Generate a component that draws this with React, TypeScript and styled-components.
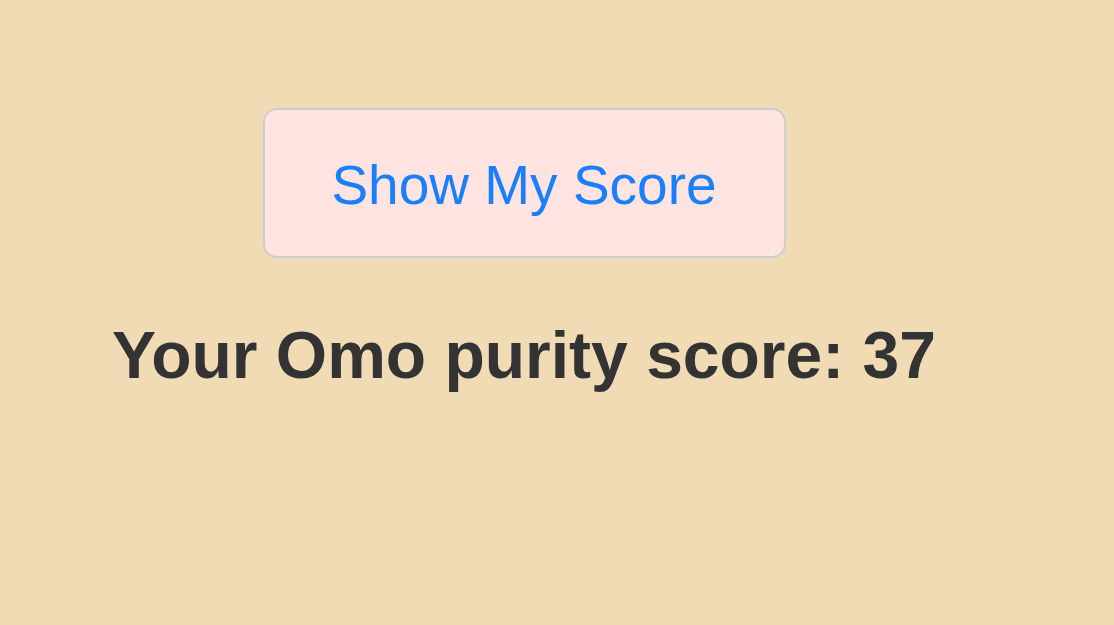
import React from "react";
import styled, { createGlobalStyle } from "styled-components";

const GlobalStyle = createGlobalStyle`
  html, body {
    margin: 0;
    padding: 0;
    background: #f0dbb5;
  }
  body {
    font-family: "Liberation Sans", Arial, Helvetica, sans-serif;
  }
`;

const Page = styled.main`
  width: 1048px;
  min-height: 625px;
  box-sizing: border-box;
  padding-top: 108px;
  display: flex;
  flex-direction: column;
  align-items: center;
`;

const ScoreButton = styled.button`
  width: 523px;
  box-sizing: border-box;
  padding: 48px 0 43px;
  background: #ffe4e1;
  border: 2px solid #cdcdcd;
  border-radius: 14px;
  color: #1a7ffb;
  font-family: "Liberation Sans", Arial, Helvetica, sans-serif;
  font-size: 55px;
  line-height: 55px;
  cursor: pointer;
`;

const Result = styled.h1`
  margin: 64px 0 0;
  color: #333333;
  font-size: 66px;
  line-height: 66px;
  font-weight: 700;
  white-space: nowrap;
`;

export default function App() {
  return (
    <>
      <GlobalStyle />
      <Page>
        <ScoreButton type="button">Show My Score</ScoreButton>
        <Result>Your Omo purity score: 37</Result>
      </Page>
    </>
  );
}
